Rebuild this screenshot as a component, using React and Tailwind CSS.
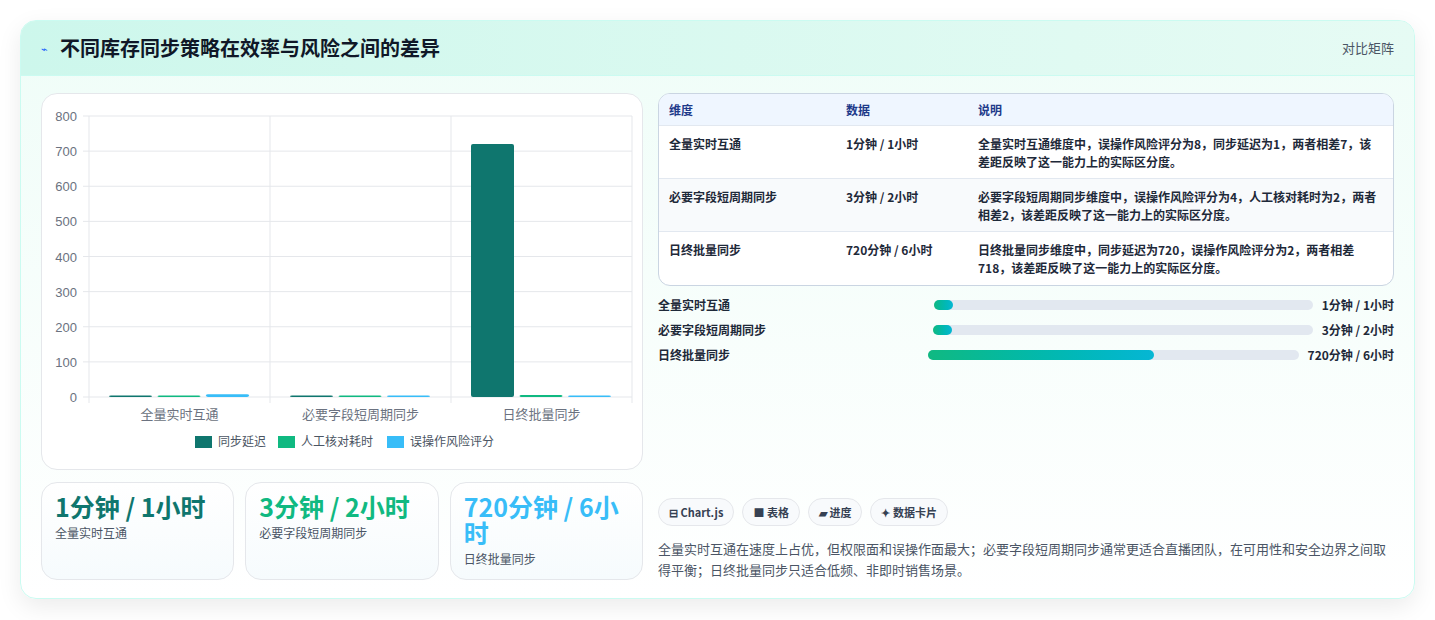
import React from "react";

const font = { fontFamily: '"Noto Sans CJK SC", "Noto Sans", sans-serif' };

const groups = [
  { name: "全量实时互通", v: [1, 1, 8] },
  { name: "必要字段短周期同步", v: [3, 2, 4] },
  { name: "日终批量同步", v: [720, 6, 2] },
];
const colors = ["#0f766e", "#10b981", "#38bdf8"];

function Chart() {
  const x0 = 47, x1 = 590, yTop = 22, yBot = 303;
  const h = yBot - yTop;
  const gw = (x1 - x0) / 3;
  return (
    <svg width="600" height="370" className="block">
      {[0, 100, 200, 300, 400, 500, 600, 700, 800].map((t) => {
        const y = yBot - (t / 800) * h;
        return (
          <g key={t}>
            <line x1={x0 - 6} x2={x1} y1={y} y2={y} stroke="#e5e7eb" />
            <text x={x0 - 12} y={y + 5} textAnchor="end" fontSize="13" fill="#6b7280" fontFamily="Liberation Sans, sans-serif">{t}</text>
          </g>
        );
      })}
      {[0, 1, 2, 3].map((i) => (
        <line key={i} x1={x0 + i * gw} x2={x0 + i * gw} y1={yTop} y2={yBot + 6} stroke="#e5e7eb" />
      ))}
      {groups.map((g, gi) =>
        g.v.map((v, bi) => {
          const bh = Math.max((v / 800) * h, 1.5);
          return (
            <rect key={gi + "-" + bi} x={x0 + gi * gw + 20 + bi * 48.5} y={yBot - bh} width="43" height={bh} rx="2" fill={colors[bi]} />
          );
        })
      )}
      {groups.map((g, gi) => (
        <text key={g.name} x={x0 + gi * gw + gw / 2} y={yBot + 22} textAnchor="middle" fontSize="13" fill="#6b7280" fontFamily='"Noto Sans CJK SC", sans-serif'>{g.name}</text>
      ))}
      {[["同步延迟", 153], ["人工核对耗时", 236], ["误操作风险评分", 345]].map(([l, x], i) => (
        <g key={l}>
          <rect x={x} y={342} width="17" height="12" fill={colors[i]} />
          <text x={x + 23} y={352} fontSize="12" fill="#4b5563" fontFamily='"Noto Sans CJK SC", sans-serif'>{l}</text>
        </g>
      ))}
    </svg>
  );
}

const rows = [
  ["全量实时互通", "1分钟 / 1小时", "全量实时互通维度中，误操作风险评分为8，同步延迟为1，两者相差7，该差距反映了这一能力上的实际区分度。"],
  ["必要字段短周期同步", "3分钟 / 2小时", "必要字段短周期同步维度中，误操作风险评分为4，人工核对耗时为2，两者相差2，该差距反映了这一能力上的实际区分度。"],
  ["日终批量同步", "720分钟 / 6小时", "日终批量同步维度中，同步延迟为720，误操作风险评分为2，两者相差718，该差距反映了这一能力上的实际区分度。"],
];

const progress = [
  ["全量实时互通", "1分钟 / 1小时", "w-[5%]", "w-[276px]"],
  ["必要字段短周期同步", "3分钟 / 2小时", "w-[5%]", "w-[275px]"],
  ["日终批量同步", "720分钟 / 6小时", "w-[61%]", "w-[270px]"],
];

export default function App() {
  return (
    <div className="min-h-screen bg-white p-5" style={font}>
      <div className="rounded-2xl border border-teal-100 bg-gradient-to-b from-[#effdf8] to-white shadow-[0_8px_24px_rgba(0,0,0,0.08)] overflow-hidden">
        <div className="flex items-center justify-between h-[55px] px-5 bg-gradient-to-r from-[#cdf7ec] to-[#e6fbf4] border-b border-teal-100">
          <div className="flex items-center gap-3">
            <span className="text-[11px] text-blue-600">⌁</span>
            <h1 className="text-[20px] font-bold text-gray-900">不同库存同步策略在效率与风险之间的差异</h1>
          </div>
          <span className="text-[13px] text-gray-600">对比矩阵</span>
        </div>
        <div className="flex gap-[15px] px-5 pt-[17px] pb-[18px]">
          <div className="w-[602px] flex flex-col gap-3">
            <div className="h-[377px] rounded-2xl border border-gray-200 bg-white">
              <Chart />
            </div>
            <div className="grid grid-cols-3 gap-[11px]">
              {[["1分钟 / 1小时", "全量实时互通", "text-[#0f766e]"], ["3分钟 / 2小时", "必要字段短周期同步", "text-[#10b981]"], ["720分钟 / 6小时", "日终批量同步", "text-[#38bdf8]"]].map(([v, l, c]) => (
                <div key={l} className="h-[98px] rounded-2xl border border-gray-200 bg-gradient-to-b from-white to-[#f6fbfd] px-[13px] pt-[10px]">
                  <div className={"text-[25px] leading-[26px] font-bold " + c}>{v}</div>
                  <div className="text-[12px] text-gray-600 mt-[5px]">{l}</div>
                </div>
              ))}
            </div>
          </div>
          <div className="flex-1 flex flex-col">
            <div className="rounded-xl border border-slate-300 bg-white overflow-hidden text-[12px]">
              <div className="flex h-[32px] items-center bg-[#eff6ff] border-b border-slate-200 font-semibold text-[#1e3a8a]">
                <div className="w-[187px] pl-[10px]">维度</div>
                <div className="w-[132px]">数据</div>
                <div className="flex-1">说明</div>
              </div>
              {rows.map((r, i) => (
                <div key={r[0]} className={"flex pt-[9px] h-[53px] font-semibold text-gray-800 " + (i === 1 ? "bg-slate-50 " : "") + (i < 2 ? "border-b border-slate-200" : "")}>
                  <div className="w-[187px] pl-[10px]">{r[0]}</div>
                  <div className="w-[132px]">{r[1]}</div>
                  <div className="flex-1 pr-3 leading-[18px]">{r[2]}</div>
                </div>
              ))}
            </div>
            <div className="flex flex-col gap-[6px] mt-[9px] text-[12px] font-semibold text-gray-800">
              {progress.map(([l, v, w, lw]) => (
                <div key={l} className="flex items-center h-[19px]">
                  <span className={"shrink-0 " + lw}>{l}</span>
                  <div className="flex-1 h-[10px] rounded-full bg-[#e2e8f0]">
                    <div className={"h-full rounded-full bg-gradient-to-r from-[#10b981] to-[#06b6d4] " + w} />
                  </div>
                  <span className="ml-[9px] shrink-0">{v}</span>
                </div>
              ))}
            </div>
            <div className="flex-1" />
            <div className="flex gap-[8px] text-[11px] font-semibold text-gray-700">
              {["⊟ Chart.js", "■ 表格", "▰ 进度", "✦ 数据卡片"].map((c) => (
                <span key={c} className="rounded-full border border-gray-200 bg-slate-50 px-[10px] py-[5px]">{c}</span>
              ))}
            </div>
            <p className="mt-[12px] text-[13px] leading-[21px] text-gray-600">全量实时互通在速度上占优，但权限面和误操作面最大；必要字段短周期同步通常更适合直播团队，在可用性和安全边界之间取得平衡；日终批量同步只适合低频、非即时销售场景。</p>
          </div>
        </div>
      </div>
    </div>
  );
}
